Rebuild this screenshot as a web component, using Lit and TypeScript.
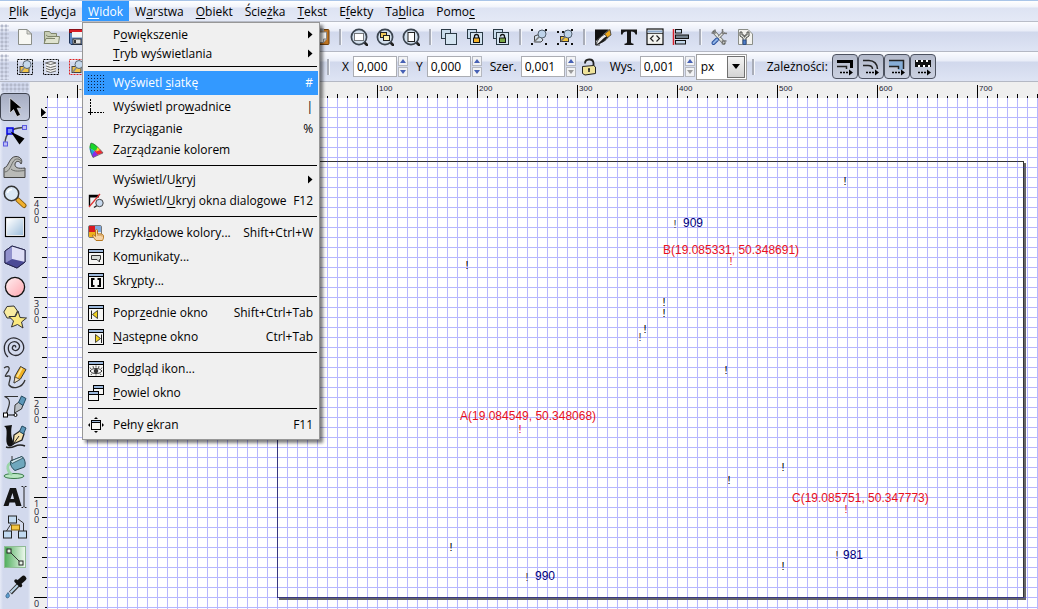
import { LitElement, html, svg, css, nothing, TemplateResult } from 'lit';
import { customElement, state } from 'lit/decorators.js';
import { classMap } from 'lit/directives/class-map.js';

type Art = TemplateResult;

/* ---------- shared drawing parts ---------- */

const windowFrame = (inner: unknown) => svg`
  <rect x="0.5" y="0.5" width="15" height="15" fill="#f4f4f2" stroke="#000"/>
  <rect x="1" y="1" width="14" height="2" fill="#9db9dc"/>
  <path d="M1 3.5H15" stroke="#000"/>
  ${inner}`;

const magnifier = (inner: unknown) => svg`
  <path d="M14 14L17 17" stroke="#222" stroke-width="2.6" stroke-linecap="round"/>
  <circle cx="9" cy="9" r="7.6" fill="#d3e0ee" stroke="#3c4550" stroke-width="1.7"/>
  ${inner}`;

const dashedBox = (colour: string, inner: unknown) => svg`
  <rect x="1.5" y="1.5" width="15" height="15" fill="none" stroke="${colour}" stroke-dasharray="2 1"/>
  ${inner}`;

const lens = svg`
  <path d="M8 10L5 14" stroke="#8a8d90" stroke-width="1.6"/>
  <circle cx="11" cy="6.5" r="4" fill="#c5d8ec" stroke="#5a6672"/>`;

const sheets = svg`
  <rect x="1.5" y="1.5" width="9" height="9" fill="#c9dcec" stroke="#2b3a46"/>
  <rect x="5.5" y="5.5" width="11" height="11" fill="#d4e4f1" stroke="#2b3a46"/>`;

const lockedSheets = svg`
  <rect x="1.5" y="1.5" width="9" height="9" fill="#c9dcec" stroke="#2b3a46"/>
  <rect x="4.5" y="4.5" width="12" height="12" fill="#d4e4f1" stroke="#2b3a46"/>`;

const arrowTail = svg`
  <path d="M4 14.5H13" stroke="#000" stroke-width="1.4" stroke-dasharray="2 1"/>
  <path d="M13 11.5L17 14.5L13 17.5Z" fill="#000"/>`;

/* ---------- menu icons, 16 by 16 ---------- */

const dots: Art[] = [];
for (let y = 0; y < 16; y += 3) {
  for (let x = 0; x < 16; x += 3) {
    dots.push(svg`<rect x="${x}" y="${y}" width="1" height="1" fill="#0b2347"/>`);
  }
}

const menuIcons: Record<string, Art> = {
  grid: svg`${dots}`,
  guides: svg`
    <path d="M2.5 0V16" stroke="#000" stroke-dasharray="2 1"/>
    <path d="M0 13.5H16" stroke="#000" stroke-dasharray="2 1"/>
    <path d="M0 13.5H5M2.5 11V16" stroke="#000"/>`,
  colour: svg`
    <path d="M3 1C6 1 14 9 15 11L5 15.500C3 12 1 5 3 1Z" fill="#ddd"/>
    <path d="M3 1C6 1 9 4 11 6.500L6.500 9L1.500 6C1.600 4 2 2 3 1Z" fill="#19d62b"/>
    <path d="M11 6.500L15 11L9 13L6.500 9Z" fill="#f02a35"/>
    <path d="M1.500 6L6.500 9L5.500 15C3 12.500 1.600 9 1.500 6Z" fill="#17a6d8"/>
    <path d="M6.500 9L10 13L5 15.500L4 13Z" fill="#8a2be8"/>
    <path d="M9.500 5L12.500 8L8 9.500Z" fill="#f4e02a"/>
    <path d="M3 1C6 1 14 9 15 11L5 15.500C3 12 1 5 3 1Z" fill="none" stroke="#444" stroke-width=".6"/>`,
  dialogs: svg`
    <path d="M1.500 13V2.500H11" fill="none" stroke="#000" stroke-width="1.4"/>
    <path d="M1 3.500H11" stroke="#000" stroke-width="2"/>
    <path d="M1 14L12 1" stroke="#d33" stroke-width="1.2"/>
    <path d="M9 12.500L6 14.500" stroke="#222" stroke-width="1.5"/>
    <circle cx="11.500" cy="10" r="3.700" fill="#c7d9ed" stroke="#444"/>`,
  swatches: svg`
    <rect x="0.500" y="0.500" width="13" height="12" rx="1.500" fill="#e8e8e8" stroke="#777"/>
    <rect x="1" y="1" width="6" height="6" fill="#d8191f"/>
    <rect x="7" y="1" width="6" height="6" fill="#7ea9dd"/>
    <rect x="1" y="7" width="6" height="5" fill="#f0b21c"/>
    <path d="M8 15.500C6 13 4 11 4.500 10C5.500 9.500 6.500 10.500 7.500 11.500L7.500 5C8.500 4 9.500 4.500 9.500 5.500V9C12 8.500 15 9 15.500 10.500C16 13 15 14 14.500 15.500Z" fill="#f6d3a4" stroke="#b5761d"/>
    <path d="M10 11V9.500M12 11V9.500M14 11.500V10" stroke="#b5761d" stroke-width=".7"/>`,
  messages: windowFrame(svg`<path d="M3.500 6.500H12.500V10.500H11.500V13L9 10.500H3.500Z" fill="#d8ddd8" stroke="#333"/>`),
  scripts: windowFrame(svg`<path d="M6.500 6H4V13H6.500M9.500 6H12V13H9.500" fill="none" stroke="#000" stroke-width="2"/>`),
  previous: windowFrame(svg`
    <path d="M3.500 5.500V14" stroke="#222"/>
    <path d="M9.500 5.500V13.500L4.500 9.500Z" fill="#f2d21d" stroke="#222" stroke-width=".8"/>`),
  next: windowFrame(svg`
    <path d="M13.500 5.500V14" stroke="#222"/>
    <path d="M7.500 5.500V13.500L12.500 9.500Z" fill="#f2d21d" stroke="#222" stroke-width=".8"/>`),
  iconPreview: windowFrame(svg`
    <path d="M2 10C5 6.500 11 6.500 14 10C11 13.500 5 13.500 2 10Z" fill="#fff" stroke="#333"/>
    <circle cx="8" cy="10" r="2.300" fill="#333"/>
    <path d="M3 8L2 6.500M5.500 7L5 5M8 6.500V4.500M10.500 7L11 5M13 8L14 6.500M4 12.500L3 14M8 13.500V14.500M12 12.500L13 14" stroke="#333" stroke-width=".8"/>`),
  duplicate: svg`
    <rect x="5.500" y="0.500" width="10" height="9" fill="#f4f4f2" stroke="#000"/>
    <rect x="6" y="1" width="9" height="2" fill="#9db9dc"/>
    <path d="M6 3.500H15" stroke="#000"/>
    <rect x="0.500" y="6.500" width="10" height="9" fill="#f4f4f2" stroke="#000"/>
    <rect x="1" y="7" width="9" height="2" fill="#9db9dc"/>
    <path d="M1 9.500H10" stroke="#000"/>`,
  fullscreen: svg`
    <rect x="3.500" y="3.500" width="9" height="9" fill="#f4f4f2" stroke="#000"/>
    <path d="M4 5.500H12" stroke="#000"/>
    <path d="M4 4.500H12" stroke="#9db9dc"/>
    <path d="M6 2L8 0L10 2ZM6 14L8 16L10 14ZM2 6L0 8L2 10ZM14 6L16 8L14 10Z" fill="#000"/>`,
};

/* ---------- toolbar icons, 18 by 18 ---------- */

const barIcons: Record<string, Art> = {
  new: svg`
    <path d="M2.500 1.500H11L15.500 6V16.500H2.500Z" fill="#f7f7f3" stroke="#8b8e88"/>
    <path d="M11 1.500V6H15.500Z" fill="#dcdcd6" stroke="#8b8e88" stroke-width=".8"/>`,
  open: svg`
    <path d="M2.500 15V3.500H7.500L9 5.500H14.500V9" fill="#c7cdb4" stroke="#80866c"/>
    <path d="M4 7L6 8.500H17.500L16.500 15.500H2L4 10.500H13" fill="#dfe3cf" stroke="#80866c"/>`,
  save: svg`
    <path d="M1.500 1.500H16.500V16.500H3L1.500 15Z" fill="#5d84c0" stroke="#1d3257"/>
    <rect x="1.500" y="1.500" width="15" height="3" fill="#d81e28" stroke="#8a1018"/>
    <rect x="4" y="4" width="10" height="5.500" fill="#f5f5f5"/>
    <rect x="5" y="11" width="8" height="5" fill="#e2e2e2" stroke="#333"/>
    <rect x="6" y="12" width="2" height="3" fill="#333"/>`,
  paste: svg`
    <rect x="2" y="1.500" width="15" height="15" rx="1" fill="#bd7422" stroke="#6d3d08"/>
    <path d="M4 4H14.500V11L11.500 14.500H4Z" fill="#f4f4f2" stroke="#888"/>
    <path d="M14.500 11H11.500V14.500" fill="#ccc" stroke="#888"/>
    <rect x="6" y="0.500" width="6" height="3" fill="#999"/>`,
  zoomSelection: magnifier(svg`<rect x="4.500" y="5.500" width="9" height="7" fill="#fff" stroke="#000" stroke-dasharray="1 1"/>`),
  zoomDrawing: magnifier(svg`
    <rect x="4.500" y="4.500" width="6" height="5" fill="#f0ca5b" stroke="#222"/>
    <rect x="7.500" y="7.500" width="6" height="5" fill="#fff3b0" stroke="#222"/>`),
  zoomPage: magnifier(svg`<rect x="6" y="4.500" width="6.500" height="9" fill="#fff" stroke="#222"/>`),
  duplicate: sheets,
  clone: svg`${lockedSheets}
    <path d="M8.500 10V8.500A2 2 0 0 1 12.500 8.500V10" fill="none" stroke="#111" stroke-width="1.300"/>
    <rect x="7.500" y="10" width="6" height="4.500" fill="#f3b32a" stroke="#111"/>`,
  unlinkClone: svg`${lockedSheets}
    <path d="M8.500 8.500A2 2 0 0 1 12.500 8.500V10" fill="none" stroke="#111" stroke-width="1.300"/>
    <rect x="7.500" y="10" width="6" height="4.500" fill="#7aa746" stroke="#111"/>`,
  group: svg`
    <path d="M1 1H3V3H1ZM15 15H17V17H15ZM15 1H17V3H15ZM1 15H3V17H1Z" fill="#111"/>
    <path d="M4.500 8L9 6.500L13 12L11 14H4.500Z" fill="#d4e0ec" stroke="#444"/>
    <path d="M9 9L4 14" stroke="#777" stroke-width="1.500"/>
    <circle cx="12" cy="6" r="4" fill="#bed3ea" stroke="#54616e"/>`,
  ungroup: svg`
    <path d="M1 3H3V5H1ZM15 15H17V17H15ZM15 1H17V3H15ZM1 15H3V17H1ZM6 3H8V5H6ZM9 15H11V17H9Z" fill="#111"/>
    <rect x="4.500" y="8.500" width="8" height="5" fill="#f1c33a" stroke="#333"/>
    <path d="M9 9L5 13" stroke="#777" stroke-width="1.500"/>
    <circle cx="12" cy="6" r="4" fill="#bed3ea" stroke="#54616e"/>`,
  fillStroke: svg`
    <path d="M1 1.500H15L1 14Z" fill="#111"/>
    <path d="M1.500 12V17H6" fill="#eee" stroke="#333"/>
    <path d="M2 17C3 12 6 9 11 6L14 9C12 13 8 14 2 17Z" fill="#e9e9e9" stroke="#333"/>
    <path d="M2 17C6 15 9 9 14 8C12 13 8 15 2 17Z" fill="#1b1b1b"/>
    <path d="M10.500 6L16 1.500L17 7L13.500 9.500Z" fill="#eda81c" stroke="#333" stroke-width=".8"/>`,
  text: svg`<path d="M1 1.500H17V6.500H15.500C15 4.500 14 3.500 11 3.500V14C11 15.500 12 15.500 13.500 15.800V17H4.500V15.800C6 15.500 7 15.500 7 14V3.500C4 3.500 3 4.500 2.500 6.500H1Z" fill="#161616"/>`,
  xml: svg`
    <rect x="1" y="1" width="16" height="15.500" fill="#f3f3f0" stroke="#111" stroke-width="1.200"/>
    <path d="M1.600 3.500H16.400" stroke="#8da9cc" stroke-width="2"/>
    <path d="M1 5.500H17" stroke="#222" stroke-width=".8"/>
    <path d="M7.500 7.500L4.500 10.500L7.500 13.500M10.500 7.500L13.500 10.500L10.500 13.500" fill="none" stroke="#222" stroke-width="1.200"/>`,
  align: svg`
    <path d="M1.500 1V17" stroke="#d6202a" stroke-width="1.500"/>
    <rect x="3.500" y="1.500" width="6" height="3.500" fill="#c2d6e9" stroke="#111"/>
    <rect x="3.500" y="7" width="13" height="3.500" fill="#75828f" stroke="#111"/>
    <rect x="3.500" y="12.500" width="10" height="3.500" fill="#c2d6e9" stroke="#111"/>`,
  preferences: svg`
    <path d="M4 4L14 15" stroke="#63665f" stroke-width="3.400" stroke-linecap="round"/>
    <path d="M4 4L14 15" stroke="#e4e6e1" stroke-width="2"/>
    <path d="M1.500 5L5 5L5 1.500M12.500 16.500V13H16.500" fill="none" stroke="#777" stroke-width="1.500"/>
    <path d="M14 4L9 9" stroke="#666" stroke-width="3"/>
    <path d="M14 4L9 9" stroke="#e4e6e1" stroke-width="1.500"/>
    <path d="M12.500 1L12.500 5L17 5.500" fill="none" stroke="#777" stroke-width="1.500"/>
    <path d="M7 11.500L3.500 15" stroke="#29509c" stroke-width="4" stroke-linecap="round"/>
    <path d="M7 11.500L3.500 15" stroke="#8fb3e6" stroke-width="2" stroke-linecap="round"/>`,
  document: svg`
    <path d="M2.500 1.500H12L16.500 6V16.500H2.500Z" fill="#f2f2ee" stroke="#8b8e88"/>
    <path d="M4 4V8L7 10V16H10V10L13 8V4H11V7H9V9H8V7H6V4Z" fill="#e0e2dc" stroke="#4a4d48"/>
    <rect x="7" y="12" width="3" height="4.500" fill="#4d7cc4" stroke="#24457f" stroke-width=".8"/>`,
  selectAll: dashedBox('#000', svg`
    <rect x="4" y="8.500" width="9" height="6" fill="#f2c548" stroke="#444"/>${lens}`),
  selectLayers: dashedBox('#000', svg`
    <path d="M4 5L10 3.500L14 5V13L8 14.500L4 13Z" fill="#f2f2f0"/>
    <path d="M3.500 5L9 3.500L14 5L8.500 6.500ZM4 8L8.500 9.500L14 8M4 10.500L8.500 12L14 10.500M4 13L8.500 14.500L14 13" fill="none" stroke="#666"/>`),
  deselect: dashedBox('#d22', svg`
    <rect x="4" y="8.500" width="9" height="6" fill="#f2c548" stroke="#444"/>${lens}`),
  scaleStroke: svg`
    <path d="M1 3.500H15.500V10" fill="none" stroke="#000" stroke-width="3"/>
    <path d="M1 8.500H10.500V11" fill="none" stroke="#222" stroke-width="1.500"/>${arrowTail}`,
  scaleCorners: svg`
    <path d="M1 2.500H7C12 2.500 15.500 6 15.500 11M1 7.500H6C9 7.500 10.500 9 10.500 11" fill="none" stroke="#222" stroke-width="1.500"/>${arrowTail}`,
  moveGradients: svg`
    <path d="M1 3V8H10V12H15V3Z" fill="#86add6"/>
    <path d="M1 2.500H15.500V11M1 8.500H10.500V11" fill="none" stroke="#222" stroke-width="1.500"/>${arrowTail}`,
  movePatterns: svg`
    <path d="M1 2H17V9H1Z" fill="#111"/>
    <path d="M2 3H4M7 3H9M12 3H14M4 8H6M9 8H11M14 8H16" stroke="#fff" stroke-width="2"/>${arrowTail}`,
  unlocked: svg`
    <path d="M5 5.500C5 0.500 13 0 13.500 5V9" fill="none" stroke="#222" stroke-width="1.800"/>
    <path d="M2.500 8.500L13.500 7.500L15.500 9V15.500L5 17L2.500 15.500Z" fill="#efe39b" stroke="#222"/>
    <path d="M9 10.500V14M8 11H10" stroke="#222" stroke-width="1.600"/>`,
};

/* ---------- toolbox icons, 24 by 24 ---------- */

const toolIcons: Record<string, Art> = {
  select: svg`<path d="M7 3V18L10.500 14.500L14 21.500L17.500 20L14.200 13.200H19Z" fill="#000" stroke="#f5f5f5" stroke-width=".6"/>`,
  node: svg`
    <path d="M2 19C2 9 8 3 20 2.500" fill="none" stroke="#444" stroke-width="1.300"/>
    <rect x="0.500" y="17" width="4" height="4" fill="#bcbcf5" stroke="#5a5ae0"/>
    <rect x="19.500" y="0.500" width="4" height="4" fill="#bcbcf5" stroke="#5a5ae0"/>
    <rect x="4" y="3" width="6" height="6" fill="#7d8ff6" stroke="#0505e0" stroke-width="1.500"/>
    <path d="M7.500 6.500L21.500 13.500L16.500 19.500Z" fill="#000"/>`,
  tweak: svg`
    <path d="M1 22.500V13C6 12 6 1.500 13 1.500C18 1.500 20 6 18 9C17 5.500 12.500 5.500 12 9C11.500 12.500 15 14 22 13V22.500Z" fill="#b9bab7" stroke="#444"/>
    <path d="M1.500 17C7 17 8 9 11 5.500C13 3 17 3.500 18.500 7M8 14C11 17 17 16 22 15.500" fill="none" stroke="#6a6c6a"/>`,
  zoom: svg`
    <path d="M15 15L21 20.500" stroke="#7f560c" stroke-width="5" stroke-linecap="round"/>
    <path d="M15 15L21 20.500" stroke="#f1b02e" stroke-width="3.200" stroke-linecap="round"/>
    <circle cx="8.500" cy="8.500" r="7.200" fill="#dbe8f5" stroke="#333" stroke-width="1.500"/>
    <path d="M4.500 8C5 5.500 7 4.500 9 4.500" fill="none" stroke="#fff" stroke-width="1.500"/>`,
  rect: svg`
    <defs><linearGradient id="r" x1="0" y1="0" x2="1" y2="1"><stop offset="0" stop-color="#fff"/><stop offset="1" stop-color="#9fbfdd"/></linearGradient></defs>
    <rect x="2.500" y="2.500" width="19" height="19" fill="#fff" stroke="#000" stroke-width="1.200"/>
    <rect x="4" y="4" width="16" height="16" fill="url(#r)"/>`,
  box: svg`
    <path d="M2 6L9 1L22 5V17L14 23L2 18Z" fill="#c7c7ea" stroke="#25254d"/>
    <path d="M2 6L9 1V14L2 18Z" fill="#9191cc"/>
    <path d="M9 1L22 5V17L9 14Z" fill="#dedef6"/>
    <path d="M2 18L9 14L22 17L14 23Z" fill="#4b4b96"/>
    <path d="M2 6L9 1L22 5V17L14 23L2 18Z" fill="none" stroke="#25254d"/>`,
  ellipse: svg`
    <defs><linearGradient id="e" x1="0" y1="0" x2="1" y2="1"><stop offset="0" stop-color="#fff0f1"/><stop offset="1" stop-color="#ffa6b0"/></linearGradient></defs>
    <circle cx="12" cy="12" r="9.600" fill="url(#e)" stroke="#111" stroke-width="1.300"/>`,
  star: svg`
    <path d="M4 1.500L11 1L14.500 6L11 13L4 13L0.800 7Z" fill="#f9eca0" stroke="#333"/>
    <path d="M15 6L17 12.500L23.500 13L18.500 17L20 23L14.500 19.500L8.500 22L10.500 16L6 11.500L12.500 11.500Z" fill="#fbe980" stroke="#333"/>`,
  spiral: svg`<path d="M12.500 12.500C13.500 10.500 10.500 9.500 9.500 12C8.500 15 13 17 15.500 14C18.500 10 14 5.500 9.500 7C4 9 4 17 9 19.500C15 22.500 22 17.500 20.500 10.500C19 4 11 1 5.500 4.500C-0.500 9 0.500 18 5 22" fill="none" stroke="#2c2c33" stroke-width="1.300"/>`,
  pencil: svg`
    <path d="M1 3C6 0 8 3 4 8C2 11 1 12 5 11C10 10 5 18 6 20C9 24 19 24 22 15" fill="none" stroke="#333" stroke-width="1.300"/>
    <path d="M11 18L12 11L17.500 1.500L23 4.500L17.500 14Z" fill="#f0b021" stroke="#333"/>
    <path d="M14 12L19 3" stroke="#fbe38f" stroke-width="1.800"/>
    <path d="M11 18L12 12L17 14.500Z" fill="#f5e3bf" stroke="#333" stroke-width=".7"/>`,
  pen: svg`
    <path d="M3 20C4 14 11 5 1.500 1.500H15" fill="none" stroke="#333" stroke-width="1.200"/>
    <rect x="0.500" y="18" width="4" height="4" fill="#fff" stroke="#000"/>
    <path d="M5 20H13" stroke="#000"/><circle cx="12.500" cy="20" r="1.500" fill="#fff" stroke="#000"/>
    <path d="M11.500 18L12 10L16 7L20 10L18.500 14Z" fill="#b9bfc6" stroke="#333"/>
    <path d="M15.500 7.500L18.500 1L23 3.500L20 10.500Z" fill="#5c97b9" stroke="#23495e"/>`,
  calligraphy: svg`
    <path d="M1 1C6 3 2 14 4 19C6 23 9 22 12 18C9 17 7 8 9 0Z" fill="#111"/>
    <path d="M3 22C12 25 12 17 22 21" fill="none" stroke="#222" stroke-width="1.500"/>
    <path d="M10 19L11 10L17 6L21 9L19 15Z" fill="#f5e2ad" stroke="#222" stroke-width="1.300"/>
    <path d="M11 18L16 11" stroke="#222"/>
    <path d="M16.500 6.500L19 1L23 3L20.500 9Z" fill="#5c97b9" stroke="#23495e"/>`,
  bucket: svg`
    <ellipse cx="11" cy="21" rx="10" ry="2.500" fill="#b8e6c2" stroke="#397a49"/>
    <path d="M8 8C3 10 4 16 9 20" fill="none" stroke="#9ad5a8" stroke-width="2.600"/>
    <path d="M7.500 6L19 1.500C22 4 23 9 21.500 12L12 15.500C9 13.500 7 10 7.500 6Z" fill="#6fa7bd" stroke="#244754"/>
    <path d="M7.500 6L19 1.500L20 3L9 8.500Z" fill="#d5e9f0" stroke="#244754" stroke-width=".8"/>
    <path d="M9 6V1" stroke="#333"/>`,
  text: svg`
    <path d="M0.500 21L7 3H13L18.500 21H13L12 17.500H6.500L5.500 21ZM7.500 14H11L9.500 8Z" fill="#151515"/>
    <path d="M18.500 1.500H20L21 2.500L22 1.500H23.500M21 2.500V21.500M18.500 22.500H20L21 21.500L22 22.500H23.500" fill="none" stroke="#222"/>`,
  connector: svg`
    <path d="M8 9L3.500 16M15 4L20.500 8V16" fill="none" stroke="#333"/>
    <rect x="5.500" y="1" width="8" height="7" fill="#c2daf0" stroke="#222"/>
    <rect x="8.500" y="10" width="8" height="5" fill="#f5c742" stroke="#8a6208"/>
    <rect x="0.500" y="16" width="8" height="7" fill="#c2daf0" stroke="#222"/>
    <rect x="15.500" y="16" width="8" height="7" fill="#c2daf0" stroke="#222"/>`,
  gradient: svg`
    <defs><linearGradient id="g" x1="0" y1="0" x2="1" y2="0"><stop offset="0" stop-color="#4fae5c"/><stop offset="1" stop-color="#f0faf0"/></linearGradient></defs>
    <rect x="1.500" y="1.500" width="21" height="21" fill="url(#g)" stroke="#8fbb95"/>
    <path d="M6 6L18 18" stroke="#333"/>
    <rect x="4" y="4" width="4" height="4" fill="#e8f4e8" stroke="#222"/>
    <rect x="16" y="16" width="4" height="4" fill="#e8f4e8" stroke="#222"/>`,
  dropper: svg`
    <path d="M17 8L7.500 18" stroke="#333" stroke-width="4"/>
    <path d="M16.500 8.500L7.500 17.500" stroke="#bcd6ea" stroke-width="2"/>
    <path d="M13 6L17.500 10.500" stroke="#111" stroke-width="3.500" stroke-linecap="round"/>
    <path d="M16.500 7L20.500 3.500" stroke="#111" stroke-width="5.500" stroke-linecap="round"/>
    <path d="M5 17.500C6.500 20 7 21 5.500 22.500C4 23.500 2.500 22.500 3 20.500Z" fill="#5e9fd0" stroke="#28557a" stroke-width=".7"/>`,
};

/* ---------- data ---------- */

/* The letter after an underscore is the mnemonic. */
const topMenus = ['_Plik', '_Edycja', '_Widok', 'W_arstwa', '_Obiekt', 'Ście_żka', '_Tekst', 'E_fekty', 'Ta_blica', 'Pomo_c'];

interface Entry { label?: string; icon?: string; key?: string; sub?: boolean; compact?: boolean; active?: boolean; }

const viewMenu: Entry[] = [
  { label: 'P_owiększenie', sub: true, compact: true },
  { label: '_Tryb wyświetlania', sub: true, compact: true },
  {},
  { label: 'Wyświetl _siatkę', icon: 'grid', key: '#', active: true },
  { label: 'Wyświetl pro_wadnice', icon: 'guides', key: '|' },
  { label: 'Przyciąganie', key: '%', compact: true },
  { label: 'Za_rządzanie kolorem', icon: 'colour' },
  {},
  { label: 'Wyświetl/U_kryj', sub: true, compact: true },
  { label: 'Wyświetl/_Ukryj okna dialogowe', icon: 'dialogs', key: 'F12' },
  {},
  { label: 'Przykł_adowe kolory...', icon: 'swatches', key: 'Shift+Ctrl+W' },
  { label: 'Ko_munikaty...', icon: 'messages' },
  { label: 'Skr_ypty...', icon: 'scripts' },
  {},
  { label: 'Popr_zednie okno', icon: 'previous', key: 'Shift+Ctrl+Tab' },
  { label: '_Następne okno', icon: 'next', key: 'Ctrl+Tab' },
  {},
  { label: 'Po_dgląd ikon...', icon: 'iconPreview' },
  { label: '_Powiel okno', icon: 'duplicate' },
  {},
  { label: 'Pełny _ekran', icon: 'fullscreen', key: 'F11' },
];

const tools: [string, string][] = [
  ['select', 'Wskaźnik'], ['node', 'Edycja węzłów'], ['tweak', 'Ulepszanie'], ['zoom', 'Zoom'],
  ['rect', 'Prostokąt'], ['box', 'Obiekt 3D'], ['ellipse', 'Elipsa'], ['star', 'Gwiazda'],
  ['spiral', 'Spirala'], ['pencil', 'Ołówek'], ['pen', 'Pióro'], ['calligraphy', 'Kaligrafia'],
  ['bucket', 'Wypełnianie'], ['text', 'Tekst'], ['connector', 'Łącznik'], ['gradient', 'Gradient'],
  ['dropper', 'Pobieranie koloru'],
];

const commands: string[][] = [
  ['zoomSelection', 'zoomDrawing', 'zoomPage'],
  ['duplicate', 'clone', 'unlinkClone'],
  ['group', 'ungroup'],
  ['fillStroke', 'text', 'xml', 'align'],
  ['preferences', 'document'],
];

/* Drawing objects, in canvas pixels. */
const marks: [number, number, string][] = [
  [798, 87, 'dark'], [628, 130, 'dim'], [420, 171, 'dark'], [684, 167, 'red'], [617, 208, 'dark'],
  [617, 219, 'dark'], [598, 235, 'dark'], [593, 243, 'dim'], [679, 276, 'dark'], [473, 335, 'red'],
  [736, 373, 'dark'], [682, 386, 'dark'], [799, 415, 'red'], [790, 461, 'dim'], [736, 472, 'dark'],
  [404, 453, 'dark'], [480, 483, 'dim'],
];

const captions: [number, number, string, string][] = [
  [636, 129, 'navy', '909'],
  [616, 156, 'red', 'B(19.085331, 50.348691)'],
  [413, 322, 'red', 'A(19.084549, 50.348068)'],
  [745, 404, 'red', 'C(19.085751, 50.347773)'],
  [796, 461, 'navy', '981'],
  [488, 482, 'navy', '990'],
];

const mnemonic = (text: string) => {
  const at = text.indexOf('_');
  return at < 0 ? html`${text}` : html`${text.slice(0, at)}<u>${text[at + 1]}</u>${text.slice(at + 2)}`;
};

const icon = (art: Art, box: number, size = box) =>
  html`<svg width=${size} height=${size} viewBox="0 0 ${box} ${box}" aria-hidden="true">${art}</svg>`;

@customElement('app-root')
export class AppRoot extends LitElement {
  @state() private tool = 'select';
  @state() private viewWidth = window.innerWidth - 47;
  @state() private viewHeight = window.innerHeight - 98;

  private measure = () => {
    this.viewWidth = window.innerWidth - 47;
    this.viewHeight = window.innerHeight - 98;
  };

  connectedCallback() {
    super.connectedCallback();
    window.addEventListener('resize', this.measure);
  }

  disconnectedCallback() {
    window.removeEventListener('resize', this.measure);
    super.disconnectedCallback();
  }

  static styles = css`
    :host {
      display: flex;
      flex-direction: column;
      height: 100vh;
      overflow: hidden;
      background: #efefef;
      color: #000;
      font: 12px/16px "Open Sans", "Noto Sans", sans-serif;
    }
    * { box-sizing: border-box; }
    button, input, select { font: inherit; color: inherit; margin: 0; }
    button { padding: 0; border: 0; background: none; }
    svg { display: block; flex: none; }
    u { text-decoration: underline; text-underline-offset: 2px; text-decoration-thickness: 1px; }

    .menubar {
      display: flex;
      flex: none;
      height: 22px;
      padding-left: 3px;
      border-top: 1px solid #a9c5e8;
      border-bottom: 1px solid #b9bdc8;
      background: linear-gradient(#fff 0, #f1f4fb 6px, #dde3f3 7px, #e4e9f6 100%);
    }
    .menu { position: relative; display: flex; }
    .title { padding: 2px 6px 0; white-space: nowrap; }
    .title.open { background: #3399ff; color: #fff; }
    .popup {
      position: absolute;
      z-index: 2;
      top: 21px;
      left: 0;
      width: 238px;
      padding: 2px 1px;
      border: 1px solid #979797;
      background: #f0f0f0;
      box-shadow: 3px 3px 3px rgba(0, 0, 0, 0.5);
    }
    .entry {
      display: grid;
      grid-template-columns: 25px 1fr auto;
      align-items: center;
      width: 100%;
      height: 24px;
      padding: 0 5px 0 4px;
      text-align: left;
      white-space: nowrap;
    }
    .entry.compact { height: 19px; }
    .entry.active { background: #3399ff; color: #fff; }
    .rule { height: 8px; margin: 0 1px 0 4px; padding-top: 3px; }
    .rule::before { content: ""; display: block; height: 1px; background: #000; }

    .toolbar {
      display: flex;
      flex: none;
      align-items: center;
      height: 30px;
      border-bottom: 1px solid #b4b8c4;
      background: linear-gradient(#fbfcff 0, #e9edf8 9px, #d1d8ec 10px, #dee4f4 100%);
    }
    .grip {
      flex: none;
      background-image: radial-gradient(circle at 2px 2px, #b3b9cb 1px, transparent 2px);
      background-size: 4px 4px;
    }
    .grip.side { width: 9px; height: 26px; margin-right: 3px; }
    .grip.top { width: 28px; height: 9px; margin-left: 1px; }
    .group { display: flex; flex: none; }
    .command { display: grid; place-items: center; width: 26px; height: 26px; }
    .edit { margin-left: 218px; }
    .fields { margin-left: 232px; }
    .sep { flex: none; width: 12px; height: 16px; padding-left: 5px; }
    .sep::before { content: ""; display: block; width: 2px; height: 100%; background: #a9adb8; border-right: 1px solid #f4f6fb; }
    .field { display: flex; align-items: center; }
    .field label { padding: 0 4px 0 8px; }
    .field input {
      width: 44px;
      height: 21px;
      padding: 0 3px;
      border: 1px solid #abadb3;
      background: #fff;
    }
    .spin { display: grid; grid-template-rows: 10px 10px; gap: 1px; margin-left: 1px; }
    .spin button { display: grid; place-items: center; width: 10px; border: 1px solid #b5b8c0; background: #f2f3f5; color: #4660b4; }
    .spin button:disabled { color: #9a9a9a; }
    .unit { display: grid; margin-left: 1px; }
    .unit select, .unit .drop { grid-area: 1 / 1; }
    .unit select { appearance: none; width: 51px; height: 26px; padding: 0 4px; border: 1px solid #a0a0a0; border-radius: 0; background: #fff; }
    .unit .drop {
      display: grid;
      place-items: center;
      place-self: center end;
      width: 18px;
      height: 22px;
      margin-right: 2px;
      border: 1px solid #707070;
      background: linear-gradient(#f4f4f4, #d4d4d4);
      pointer-events: none;
    }
    .affect { padding: 0 4px 0 8px; }
    .toggle { display: grid; place-items: center; width: 26px; height: 25px; border: 1px solid #4d5260; border-radius: 4px; background: linear-gradient(#b4bacb, #cbd1e1); }

    .workspace { display: flex; flex: 1; min-height: 0; }
    .toolbox {
      flex: none;
      width: 30px;
      overflow: hidden;
      padding-top: 1px;
      background: linear-gradient(90deg, #e6eaf6 0, #d2d9ed 3px, #d2d9ed 28px, #e4e9f5 100%);
    }
    .tool { display: grid; place-items: center; width: 30px; height: 30px; }
    .tool.on {
      border: 1px solid #3f4450;
      border-radius: 4px;
      background: linear-gradient(#a6adc2, #c4cbdd);
      height: 28px;
      margin: 1px 0;
    }
    .view {
      display: grid;
      flex: 1;
      min-width: 0;
      grid-template: "corner across" 16px "down sheet" 1fr / 17px 1fr;
    }
    .across { grid-area: across; width: 100%; height: 16px; }
    .down { grid-area: down; width: 17px; height: 100%; }
    .sheet { grid-area: sheet; width: 100%; height: 100%; background: #fff; }
    .view svg { min-width: 0; min-height: 0; overflow: hidden; }
    .figure { font: 8px "Liberation Sans", Arial, sans-serif; fill: #223; }
    .digit { font: 9px "Open Sans", sans-serif; fill: #223; }
    .caption { font: 12px "Liberation Sans", Arial, sans-serif; }
    .mark { font: 11px "Liberation Sans", Arial, sans-serif; text-anchor: middle; }
    .dark { fill: #000; }
    .dim { fill: #444; }
    .red { fill: #e8101c; }
    .navy { fill: #00007c; }
  `;

  private entry(e: Entry) {
    if (!e.label) return html`<div class="rule" role="separator"></div>`;
    return html`
      <button class=${classMap({ entry: true, compact: !!e.compact, active: !!e.active })} role="menuitem">
        <span>${e.icon ? icon(menuIcons[e.icon], 16) : nothing}</span>
        <span>${mnemonic(e.label)}</span>
        ${e.sub
          ? html`<svg width="5" height="9" viewBox="0 0 5 9"><path d="M0 0.500L4.500 4.500L0 8.500Z" fill="#000"/></svg>`
          : html`<span>${e.key ?? ''}</span>`}
      </button>`;
  }

  private command(name: string) {
    return html`<button class="command" aria-label=${name}>${icon(barIcons[name], 18)}</button>`;
  }

  private field(id: string, label: string, value: string, atMinimum = false) {
    return html`
      <div class="field">
        <label for=${id}>${label}</label>
        <input id=${id} .value=${value} />
        <span class="spin">
          <button aria-label="${label} +"><svg width="6" height="4"><path d="M0 4L3 0L6 4Z" fill="currentColor"/></svg></button>
          <button aria-label="${label} -" ?disabled=${atMinimum}><svg width="6" height="4"><path d="M0 0L3 4L6 0Z" fill="currentColor"/></svg></button>
        </span>
      </div>`;
  }

  /* Ruler zero sits on the left edge of the page, 230px into the canvas. */
  private rulerAcross() {
    const parts: Art[] = [];
    for (let x = 0; x < this.viewWidth; x += 10) {
      const unit = x - 230;
      const major = unit % 100 === 0;
      const top = major ? 3 : unit % 20 === 0 ? 12 : 14;
      parts.push(svg`<rect x="${x}" y="${top}" width="1" height="${16 - top}"/>`);
      if (major && x + 20 < this.viewWidth) {
        parts.push(svg`<text class="figure" x="${x + 2}" y="9">${unit}</text>`);
      }
    }
    return html`<svg class="across" aria-hidden="true">${parts}</svg>`;
  }

  /* Vertical zero sits on the bottom edge of the page, 499px down. */
  private rulerDown() {
    const parts: Art[] = [];
    for (let y = 9; y < this.viewHeight; y += 10) {
      const unit = 499 - y;
      const major = unit % 100 === 0;
      const left = major ? 4 : unit % 20 === 0 ? 12 : 15;
      parts.push(svg`<rect x="${left}" y="${y}" width="${17 - left}" height="1"/>`);
      if (major) {
        [...String(unit)].forEach((digit, i) => {
          const base = y + 10 + i * 8;
          if (base < this.viewHeight) parts.push(svg`<text class="digit" x="4" y="${base}">${digit}</text>`);
        });
      }
    }
    return html`<svg class="down" aria-hidden="true">${parts}<path d="M11 10L16 14.500L11 19Z"/></svg>`;
  }

  private sheet() {
    return html`
      <svg class="sheet" role="img" aria-label="Rysunek">
        <defs>
          <pattern id="grid" width="10" height="10" patternUnits="userSpaceOnUse">
            <path d="M0 9H10V10H0ZM0 0H1V9H0Z" fill="#3f3fff" fill-opacity=".38"/>
          </pattern>
        </defs>
        <path d="M976 65H979V502H232V499H976Z" fill="#666"/>
        <rect x="230.5" y="63.5" width="746" height="436" fill="none" stroke="#333"/>
        <rect width="100%" height="100%" fill="url(#grid)"/>
        ${marks.map(([x, y, tone]) => svg`<text class="mark ${tone}" x="${x}" y="${y}">!</text>`)}
        ${captions.map(([x, y, tone, text]) => svg`<text class="caption ${tone}" x="${x}" y="${y}">${text}</text>`)}
      </svg>`;
  }

  render() {
    return html`
      <nav class="menubar" role="menubar">
        ${topMenus.map((m) => {
          const open = m === '_Widok';
          return html`
            <div class="menu">
              <button class=${classMap({ title: true, open })} role="menuitem">${mnemonic(m)}</button>
              ${open ? html`<div class="popup" role="menu">${viewMenu.map((e) => this.entry(e))}</div>` : nothing}
            </div>`;
        })}
      </nav>
      <div class="toolbar">
        <span class="grip side"></span>
        <div class="group">${['new', 'open', 'save'].map((n) => this.command(n))}</div>
        <div class="group edit">${this.command('paste')}</div>
        ${commands.map((g) => html`<span class="sep"></span><div class="group">${g.map((n) => this.command(n))}</div>`)}
      </div>
      <div class="toolbar">
        <span class="grip side"></span>
        <div class="group">${['selectAll', 'selectLayers', 'deselect'].map((n) => this.command(n))}</div>
        <span class="sep fields"></span>
        ${this.field('x', 'X', '0,000')}
        ${this.field('y', 'Y', '0,000')}
        ${this.field('w', 'Szer.', '0,001', true)}
        ${this.command('unlocked')}
        ${this.field('h', 'Wys.', '0,001', true)}
        <span class="unit">
          <select aria-label="Jednostka"><option>px</option><option>mm</option><option>cm</option></select>
          <span class="drop"><svg width="8" height="5"><path d="M0 0H8L4 5Z"/></svg></span>
        </span>
        <span class="sep"></span>
        <span class="affect">Zależności:</span>
        <div class="group">
          ${['scaleStroke', 'scaleCorners', 'moveGradients', 'movePatterns'].map(
            (n) => html`<button class="toggle" aria-pressed="true" aria-label=${n}>${icon(barIcons[n], 18)}</button>`)}
        </div>
      </div>
      <div class="workspace">
        <div class="toolbox">
          <div class="grip top"></div>
          ${tools.map(([id, name]) => html`
            <button class=${classMap({ tool: true, on: this.tool === id })} aria-label=${name}
              @click=${() => { this.tool = id; }}>${icon(toolIcons[id], 24)}</button>`)}
        </div>
        <div class="view">${this.rulerAcross()}${this.rulerDown()}${this.sheet()}</div>
      </div>`;
  }
}
